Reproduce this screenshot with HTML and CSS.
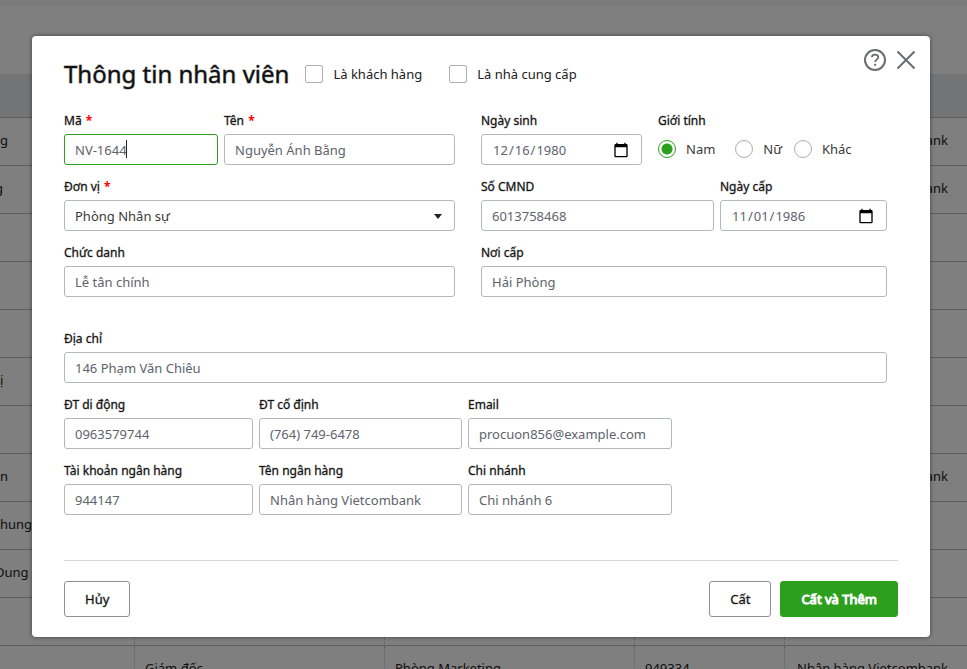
FILE: index.html
```html
<!DOCTYPE html>
<html lang="vi">
<head>
<meta charset="utf-8">
<meta name="viewport" content="width=device-width, initial-scale=1">
<title>Thông tin nhân viên</title>
<link rel="stylesheet" href="styles.css">
</head>
<body>
<main class="page">
  <div class="page-head"></div>
  <table class="grid">
    <colgroup><col class="c-name"><col class="c-title"><col class="c-unit"><col class="c-account"><col></colgroup>
    <thead><tr><th></th><th></th><th></th><th></th><th></th></tr></thead>
    <tbody>
      <tr><td>g</td><td></td><td></td><td></td><td>Nhân hàng Vietcombank</td></tr>
      <tr><td class="cut">g</td><td></td><td></td><td></td><td>Nhân hàng Vietcombank</td></tr>
      <tr><td></td><td></td><td></td><td></td><td></td></tr>
      <tr><td></td><td></td><td></td><td></td><td></td></tr>
      <tr><td></td><td></td><td></td><td></td><td></td></tr>
      <tr><td>ị</td><td></td><td></td><td></td><td></td></tr>
      <tr><td></td><td></td><td></td><td></td><td></td></tr>
      <tr><td>n</td><td></td><td></td><td></td><td>Nhân hàng Vietcombank</td></tr>
      <tr><td>hung</td><td></td><td></td><td></td><td></td></tr>
      <tr><td class="cut">Dung</td><td></td><td></td><td></td><td></td></tr>
      <tr><td></td><td></td><td></td><td></td><td></td></tr>
      <tr><td></td><td>Giám đốc</td><td>Phòng Marketing</td><td>949334</td><td>Nhân hàng Vietcombank</td></tr>
    </tbody>
  </table>
</main>

<div class="overlay">
  <form class="dialog" role="dialog" aria-labelledby="dialog-title">
    <div class="tools">
      <button type="button" class="tool" aria-label="Trợ giúp">
        <svg width="24" height="24" viewBox="0 0 24 24" fill="none" stroke="#6b6c72" stroke-width="2"><circle cx="12" cy="12" r="10"/><path d="M8.8 9.2C9 7.5 10.300 6.600 12 6.600c1.900 0 3.200 1 3.200 2.700 0 2.300-3.100 2.300-3.100 4.700" stroke-width="1.800"/><path d="M12.100 15.800v2"/></svg>
      </button>
      <button type="button" class="tool" aria-label="Đóng">
        <svg width="24" height="24" viewBox="0 0 24 24" fill="none" stroke="#6b6c72" stroke-width="2"><path d="M3.500 3.500l17 17M20.500 3.500l-17 17"/></svg>
      </button>
    </div>
    <header class="head">
      <h1 id="dialog-title">Thông tin nhân viên</h1>
      <label class="check"><input type="checkbox">Là khách hàng</label>
      <label class="check"><input type="checkbox">Là nhà cung cấp</label>
    </header>

    <div class="body">
      <div class="columns">
        <div class="rows">
          <div class="row code-name">
            <div class="field"><label for="code">Mã <b>*</b></label><div class="typing"><input id="code" class="active" type="text" value="NV-1644"></div></div>
            <div class="field"><label for="name">Tên <b>*</b></label><input id="name" type="text" value="Nguyễn Ánh Bằng"></div>
          </div>
          <div class="field"><label for="unit">Đơn vị <b>*</b></label><div class="select"><select id="unit"><option>Phòng Nhân sự</option></select></div></div>
          <div class="field"><label for="title">Chức danh</label><input id="title" type="text" value="Lễ tân chính"></div>
        </div>
        <div class="rows">
          <div class="row birth">
            <div class="field"><label for="dob">Ngày sinh</label><input id="dob" type="date" lang="en-US" value="1980-12-16"></div>
            <fieldset class="field gender">
              <legend>Giới tính</legend>
              <div class="radios">
                <label class="nam"><input type="radio" name="gender" checked>Nam</label>
                <label><input type="radio" name="gender">Nữ</label>
                <label><input type="radio" name="gender">Khác</label>
              </div>
            </fieldset>
          </div>
          <div class="row identity">
            <div class="field"><label for="idno">Số CMND</label><input id="idno" type="text" value="6013758468"></div>
            <div class="field"><label for="issued">Ngày cấp</label><input id="issued" type="date" lang="en-US" value="1986-11-01"></div>
          </div>
          <div class="field"><label for="place">Nơi cấp</label><input id="place" type="text" value="Hải Phòng"></div>
        </div>
      </div>

      <div class="rows contact">
        <div class="field"><label for="address">Địa chỉ</label><input id="address" type="text" value="146 Phạm Văn Chiêu"></div>
        <div class="row thirds">
          <div class="field"><label for="mobile">ĐT di động</label><input id="mobile" type="text" value="0963579744"></div>
          <div class="field"><label for="phone">ĐT cố định</label><input id="phone" type="text" value="(764) 749-6478"></div>
          <div class="field"><label for="email">Email</label><input id="email" type="text" value="procuon856@example.com"></div>
        </div>
        <div class="row thirds">
          <div class="field"><label for="account">Tài khoản ngân hàng</label><input id="account" type="text" value="944147"></div>
          <div class="field"><label for="bank">Tên ngân hàng</label><input id="bank" type="text" value="Nhân hàng Vietcombank"></div>
          <div class="field"><label for="branch">Chi nhánh</label><input id="branch" type="text" value="Chi nhánh 6"></div>
        </div>
      </div>
    </div>

    <footer class="foot">
      <button type="button" class="btn cancel">Hủy</button>
      <button type="button" class="btn">Cất</button>
      <button type="submit" class="btn primary">Cất và Thêm</button>
    </footer>
  </form>
</div>
</body>
</html>
```

FILE: styles.css
```css
* { box-sizing: border-box; }
html, body { height: 100%; margin: 0; overflow: hidden; }
body, input, select, button {
  font-family: "Noto Sans", sans-serif;
  font-size: 13px;
}
body { color: #212121; line-height: 18px; }

/* Employee list behind the dialog */
.page { height: 100%; overflow: hidden; background: #fff; border-top: 6px solid #f4f5f6; }
.page-head { height: 68px; }
.grid { width: 100%; table-layout: fixed; border-collapse: separate; border-spacing: 0; }
.c-name { width: 135px; }
.c-title, .c-unit { width: 250px; }
.c-account { width: 150px; }
.grid th { height: 44px; padding: 0; background: #e5e8eb; border-bottom: 1px solid #bbb; }
.grid td { height: 48px; padding: 0 10px 4px; border-bottom: 1px solid #bbb; border-right: 1px dotted #bbb; white-space: nowrap; }
.grid td:first-child { padding-left: 0; }
.grid td:last-child { padding-left: 12px; border-right: 0; }
.grid .cut { text-indent: -5px; }

/* Dialog */
.overlay { position: absolute; inset: 0; background: rgba(0, 0, 0, .5); padding: 36px 37px 0 32px; }
.dialog { position: relative; background: #fff; border-radius: 4px; padding: 20px 32px; box-shadow: 0 0 4px rgba(0, 0, 0, .5); }
.tools { position: absolute; top: 12px; right: 12px; display: flex; gap: 7px; }
.tool { display: block; width: 24px; height: 24px; padding: 0; border: 0; background: none; }
.tool svg { display: block; }

.head { display: flex; align-items: center; height: 36px; }
.head h1 { margin: 0 16px 0 0; font-size: 24px; line-height: 36px; font-weight: 400; color: #111; -webkit-text-stroke: 1px rgba(17, 17, 17, .5); white-space: nowrap; }
.check { display: flex; align-items: center; gap: 10px; margin-right: 27px; }
.check input { appearance: none; width: 18px; height: 18px; margin: 0; border: 1px solid #afafaf; border-radius: 2px; background: #fff; }

.body { margin-right: 11px; padding-top: 20px; }
.columns { display: grid; grid-template-columns: 391fr 406fr; gap: 26px; }
.rows { display: grid; gap: 13px; align-content: start; }
.row { display: grid; gap: 6px; }
.code-name { grid-template-columns: 2fr 3fr; }
.birth { grid-template-columns: 161fr 229fr; gap: 16px; }
.identity { grid-template-columns: 233fr 167fr; }
.contact { margin-top: 33px; }
.thirds { grid-template-columns: 189fr 203fr 204fr 209fr; }

.field { display: grid; grid-template-rows: 18px 31px; gap: 4px; min-width: 0; }
.field > label, .gender legend { font-size: 12px; line-height: 18px; color: #111; -webkit-text-stroke: 1px rgba(17, 17, 17, .3); }
.field b { color: #f00; -webkit-text-stroke: 0; margin-left: 1px; }
.field input:not([type="radio"]), .field select {
  width: 100%; height: 31px; margin: 0; padding: 0 10px;
  border: 1px solid #b5b8bb; border-radius: 3px; outline: 0;
  background: #fff; color: #60636b;
}
.field input[type="date"] { padding-right: 12px; }
.field input::-webkit-calendar-picker-indicator { width: 16px; height: 16px; padding: 0; background-size: 16px 16px; }
.field input.active { border-color: #2ca01c; }
.typing, .select { position: relative; }
.typing::after { content: ""; position: absolute; left: 62px; top: 6px; width: 1px; height: 18px; background: #222; }
.field select { appearance: none; color: #3a3a3a; }
.select::after { content: ""; position: absolute; right: 13px; top: 14px; border: 4px solid transparent; border-top: 5px solid #222; border-bottom: 0; pointer-events: none; }

.gender { display: block; margin: 0; padding: 0; border: 0; }
.gender legend { padding: 0; }
.radios { display: flex; gap: 12px; height: 29px; margin-top: 4px; align-items: center; }
.radios label { display: flex; align-items: center; gap: 10px; color: #3a3a3a; }
.radios .nam { margin-right: 8px; }
.radios input { appearance: none; width: 18px; height: 18px; margin: 0; border: 1px solid #afafaf; border-radius: 50%; background: #fff; }
.radios input:checked { border-color: #2ca01c; background: radial-gradient(circle, #2ca01c 5px, #fff 6px); }

.foot { display: flex; gap: 9px; margin-top: 45px; padding-top: 20px; border-top: 1px solid #d5d7da; }
.btn { height: 36px; padding: 0 20px; border: 1px solid #8d9096; border-radius: 3px; background: #fff; color: #111; -webkit-text-stroke: 1px rgba(17, 17, 17, .3); }
.cancel { margin-right: auto; }
.primary { border-color: #2ca01c; background: #2ca01c; color: #fff; -webkit-text-stroke: 1px #fff; }
```
